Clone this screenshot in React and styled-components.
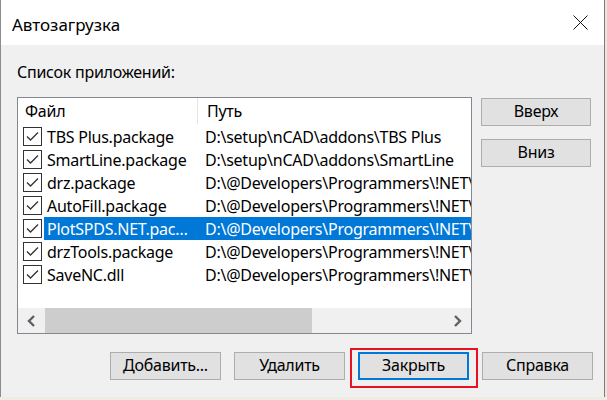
import React from 'react';
import styled, {createGlobalStyle} from 'styled-components';

const GlobalStyle = createGlobalStyle`
  html, body {
    margin: 0;
    padding: 0;
    background: #e9e6df;
  }
  body {
    font-family: "Segoe UI", "Noto Sans", "Open Sans", sans-serif;
    font-size: 16px;
    letter-spacing: -0.25px;
    color: #000;
  }
`;

const Window = styled.div`
  width: 605px;
  height: 397px;
  background: #f0f0f0;
  border-right: 1px solid #7a7a7a;
  border-left: 1px solid #8c8c8c;
  box-sizing: border-box;
  display: flex;
  flex-direction: column;
`;

const TitleBar = styled.div`
  height: 45px;
  background: #fff;
  display: flex;
  align-items: center;
  justify-content: space-between;
  padding: 0 16px 0 11px;
  box-sizing: border-box;
`;

const Title = styled.div`
  font-size: 17px;
  letter-spacing: 0;
  line-height: 20px;
  margin-top: 4px;
`;

const CloseIcon = styled.svg`
  width: 15px;
  height: 15px;
`;

const Client = styled.div`
  flex: 1;
  display: grid;
  grid-template-columns: 455px 110px;
  grid-template-rows: auto 1fr;
  column-gap: 9px;
  padding: 16px 0 0 16px;
`;

const Caption = styled.div`
  grid-column: 1 / 3;
  line-height: 22px;
  margin-bottom: 14px;
`;

const ListBox = styled.div`
  height: 237px;
  border: 1px solid #828790;
  background: #fff;
  box-sizing: border-box;
  display: flex;
  flex-direction: column;
  overflow: hidden;
`;

const Header = styled.div`
  height: 27px;
  display: flex;
  align-items: center;
  flex: none;
`;

const HeaderCell = styled.div`
  width: ${p => p.width || 'auto'};
  flex: ${p => (p.width ? 'none' : 1)};
  padding-left: ${p => p.pad}px;
  box-sizing: border-box;
  height: 100%;
  display: flex;
  align-items: center;
  border-right: ${p => (p.divider ? '1px solid #e5e5e5' : 'none')};
  margin-top: -2px;
`;

const Rows = styled.div`
  flex: 1;
`;

const Row = styled.div`
  height: 23px;
  display: flex;
  align-items: center;
  padding-left: 5px;
`;

const Check = styled.span`
  width: 19px;
  height: 19px;
  border: 1px solid #333;
  box-sizing: border-box;
  background: #fff;
  flex: none;
  display: flex;
  align-items: center;
  justify-content: center;
`;

const Label = styled.div`
  flex: 1;
  height: 100%;
  display: flex;
  align-items: center;
  margin-left: 2px;
  min-width: 0;
  background: ${p => (p.selected ? '#0078d7' : 'transparent')};
  color: ${p => (p.selected ? '#fff' : '#000')};
`;

const FileName = styled.span`
  width: 151px;
  flex: none;
  padding: 0 4px 0 3px;
  box-sizing: border-box;
  white-space: nowrap;
  overflow: hidden;
  text-overflow: ellipsis;
`;

const PathName = styled.span`
  padding-left: 10px;
  white-space: nowrap;
  overflow: hidden;
  flex: 1;
`;

const ScrollBar = styled.div`
  height: 25px;
  flex: none;
  display: flex;
  background: #f0f0f0;
`;

const ArrowButton = styled.div`
  width: 27px;
  flex: none;
  display: flex;
  align-items: center;
  justify-content: center;
`;

const Track = styled.div`
  flex: 1;
  display: flex;
`;

const Thumb = styled.div`
  width: 267px;
  background: #cdcdcd;
`;

const SideButtons = styled.div`
  display: flex;
  flex-direction: column;
  gap: 13px;
  padding-top: 1px;
`;

const Button = styled.div`
  position: relative;
  width: ${p => p.width || 110}px;
  height: 28px;
  background: #e1e1e1;
  border: ${p => (p.focused ? '2px solid #0078d7' : '1px solid #adadad')};
  box-sizing: border-box;
  display: flex;
  align-items: center;
  justify-content: center;
  line-height: 20px;
  padding-bottom: 2px;
`;

const Marked = styled.div`
  position: relative;
  &::after {
    content: '';
    position: absolute;
    top: -4px;
    bottom: -8px;
    left: -8px;
    right: -9px;
    border: 2px solid #e81123;
  }
`;

const Footer = styled.div`
  display: flex;
  gap: 13px;
  padding: 0 0 17px 109px;
  align-items: flex-start;
`;

const BottomStrip = styled.div`
  height: 3px;
  background: #efece6;
`;

const items = [
    {file: 'TBS Plus.package', path: 'D:\\setup\\nCAD\\addons\\TBS Plus'},
    {file: 'SmartLine.package', path: 'D:\\setup\\nCAD\\addons\\SmartLine'},
    {file: 'drz.package', path: 'D:\\@Developers\\Programmers\\!NET\\drz'},
    {file: 'AutoFill.package', path: 'D:\\@Developers\\Programmers\\!NET\\AutoFill'},
    {file: 'PlotSPDS.NET.package', path: 'D:\\@Developers\\Programmers\\!NET\\PlotSPDS', selected: true},
    {file: 'drzTools.package', path: 'D:\\@Developers\\Programmers\\!NET\\drzTools'},
    {file: 'SaveNC.dll', path: 'D:\\@Developers\\Programmers\\!NET\\SaveNC'},
];

const CheckMark = () => (
    <svg width="13" height="11" viewBox="0 0 13 11">
        <path d="M1 5.5 L4.5 9 L12 1.5" fill="none" stroke="#333" strokeWidth="1.3"/>
    </svg>
);

const Chevron = ({dir}) => (
    <svg width="9" height="12" viewBox="0 0 9 12">
        <path d={dir === 'left' ? 'M7 1 L2 6 L7 11' : 'M2 1 L7 6 L2 11'}
              fill="none" stroke="#606060" strokeWidth="2.4"/>
    </svg>
);

const App = () => {
    return (
        <>
            <GlobalStyle/>
            <Window>
                <TitleBar>
                    <Title>Автозагрузка</Title>
                    <CloseIcon viewBox="0 0 15 15">
                        <path d="M0.5 0.5 L14.5 14.5 M14.5 0.5 L0.5 14.5" stroke="#111" strokeWidth="1"/>
                    </CloseIcon>
                </TitleBar>
                <Client>
                    <Caption>Список приложений:</Caption>
                    <ListBox>
                        <Header>
                            <HeaderCell width="180px" pad={7} divider>Файл</HeaderCell>
                            <HeaderCell pad={9}>Путь</HeaderCell>
                        </Header>
                        <Rows>
                            {items.map(item => (
                                <Row key={item.file}>
                                    <Check><CheckMark/></Check>
                                    <Label selected={item.selected}>
                                        <FileName>{item.file}</FileName>
                                        <PathName>{item.path}</PathName>
                                    </Label>
                                </Row>
                            ))}
                        </Rows>
                        <ScrollBar>
                            <ArrowButton><Chevron dir="left"/></ArrowButton>
                            <Track><Thumb/></Track>
                            <ArrowButton><Chevron dir="right"/></ArrowButton>
                        </ScrollBar>
                    </ListBox>
                    <SideButtons>
                        <Button>Вверх</Button>
                        <Button>Вниз</Button>
                    </SideButtons>
                </Client>
                <Footer>
                    <Button width={111}>Добавить...</Button>
                    <Button width={111}>Удалить</Button>
                    <Marked>
                        <Button width={111} focused>Закрыть</Button>
                    </Marked>
                    <Button width={111}>Справка</Button>
                </Footer>
            </Window>
            <BottomStrip/>
        </>
    );
};

export default App;
